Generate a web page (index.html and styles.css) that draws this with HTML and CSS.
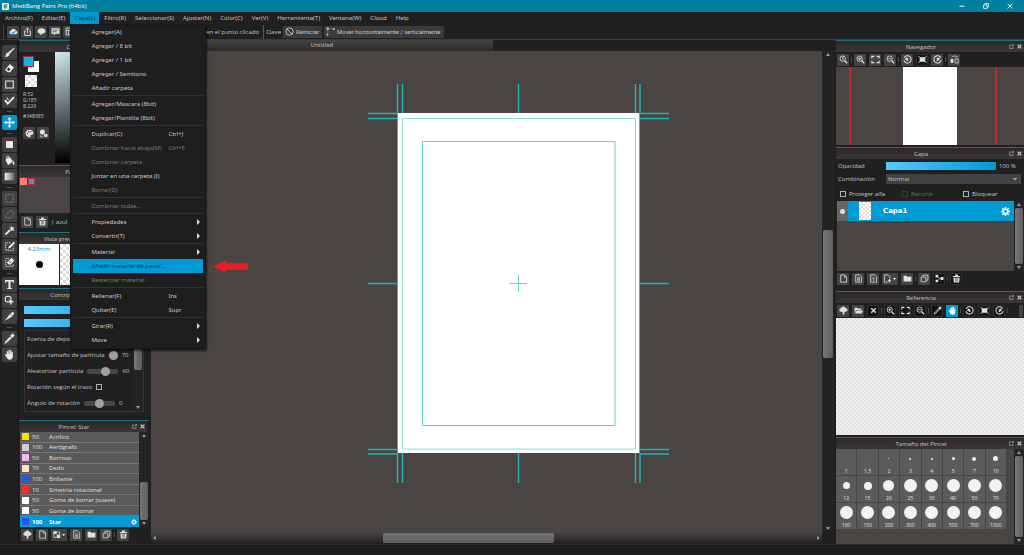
FILE: index.html
```
<!DOCTYPE html>
<html lang="es">
<head>
<meta charset="utf-8">
<title>MediBang Paint Pro (64bit)</title>
<link rel="stylesheet" href="styles.css">
</head>
<body>
<svg class="sprite" aria-hidden="true">
  <symbol id="cloud" viewBox="0 0 16 16"><path fill="#cfe4f5" d="M4 13a3.5 3.5 0 0 1-.4-6.9A4.6 4.6 0 0 1 12.300 6 3.600 3.600 0 0 1 12 13z"/><path d="M5 9l2.500 2.500L12 7" fill="none" stroke="#3d8fd0" stroke-width="2"/></symbol>
  <symbol id="share" viewBox="0 0 16 16"><path d="M5 7H3v8h10V7h-2M8 11V2M5 4.500L8 1.500l3 3" fill="none" stroke="currentColor" stroke-width="1.600"/></symbol>
  <symbol id="bubble" viewBox="0 0 16 16"><path d="M8 2c4 0 7 2 7 5s-3 5-6 5l-3 3v-3C3 11.500 1 9.500 1 7c0-3 3-5 7-5z" fill="currentColor"/></symbol>
  <symbol id="chat" viewBox="0 0 16 16"><path d="M1 2h14v10H8l-3 3v-3H1z" fill="currentColor"/><path d="M3 5.500h10M3 8.500h7" stroke="#444" stroke-width="1.400"/></symbol>
  <symbol id="grid" viewBox="0 0 16 16"><path d="M2 2h12v12H2zM2 6h12M6 6v8" fill="none" stroke="currentColor" stroke-width="1.500"/></symbol>
  <symbol id="ban" viewBox="0 0 16 16"><circle cx="8" cy="8" r="6.500" fill="none" stroke="currentColor" stroke-width="1.600"/><path d="M3.500 3.500l9 9" stroke="currentColor" stroke-width="1.600"/></symbol>
  <symbol id="axis" viewBox="0 0 16 16"><path d="M1 1h4v4H1zM12 2h4v3h-4zM1 12h3v3H1z" fill="currentColor"/><path d="M5 3h7M3 5v7" stroke="currentColor" stroke-dasharray="1.500 1"/></symbol>
  <symbol id="brush" viewBox="0 0 16 16"><path d="M15 1.500L8 9.500 6.500 8z" fill="currentColor" stroke="currentColor" stroke-width="1.200"/><path d="M6 8.500l2 2C7 14 4 14.500 1 14c1.500-1 1.500-2 2-3.500C3.500 9 4.500 8.300 6 8.500z" fill="currentColor"/></symbol>
  <symbol id="eraser" viewBox="0 0 16 16"><path d="M8.500 1.500l6 5-5.500 7H5.500L1.500 10z" fill="currentColor"/><path d="M6.500 6.500L4 9.500l3 2.500 2.500-3z" fill="#333"/></symbol>
  <symbol id="square" viewBox="0 0 16 16"><path d="M2.500 3h11v10h-11z" fill="none" stroke="currentColor" stroke-width="1.500"/></symbol>
  <symbol id="check" viewBox="0 0 16 16"><path d="M1.500 7.500l4 5L14.500 3" fill="none" stroke="currentColor" stroke-width="2.600"/><path d="M4 4l2.500 3" stroke="currentColor" stroke-width="1.500"/></symbol>
  <symbol id="move" viewBox="0 0 16 16"><path d="M8 0l3 3.500H9V7h3.500V5L16 8l-3.500 3V9H9v3.500h2L8 16l-3-3.500h2V9H3.500v2L0 8l3.500-3v2H7V3.500H5z" fill="currentColor"/></symbol>
  <symbol id="fillsq" viewBox="0 0 16 16"><path d="M3 3h10v10H3z" fill="currentColor"/></symbol>
  <symbol id="bucket" viewBox="0 0 16 16"><path d="M2 7l6-4 5 6-7 6z" fill="currentColor"/><path d="M4 6c-1-6 4-6 5 1" fill="none" stroke="currentColor" stroke-width="1.400"/><path d="M13 8c2 2 3 5 1.500 6S12 12 13 8z" fill="currentColor"/></symbol>
  <symbol id="gradient" viewBox="0 0 16 16"><linearGradient id="gg"><stop stop-color="#eee"/><stop offset="1" stop-color="#666"/></linearGradient><path d="M1 2.500h14v11H1z" fill="url(#gg)"/></symbol>
  <symbol id="marquee" viewBox="0 0 16 16"><path d="M2.500 2.500h11v11h-11z" fill="none" stroke="currentColor" stroke-width="1.300" stroke-dasharray="2 1.300"/></symbol>
  <symbol id="lasso" viewBox="0 0 16 16"><path d="M3 12C0 8 5 8 7 4c3-3 8-1 7 3s-4 6-7 6-3 1-4-1z" fill="none" stroke="currentColor" stroke-width="1.300" stroke-dasharray="2 1"/></symbol>
  <symbol id="wand" viewBox="0 0 16 16"><path d="M2 14l7-7" stroke="currentColor" stroke-width="2.600"/><path d="M11 1l1 2.500L15 3l-1.500 2.500L15 8l-3-.5L10 9V6L8 4l2.500-.5z" fill="currentColor"/></symbol>
  <symbol id="selpen" viewBox="0 0 16 16"><path d="M9 2.500H2.500v11h11V8" fill="none" stroke="currentColor" stroke-width="1.300" stroke-dasharray="2 1"/><path d="M14 1l2 2-7 7-3 1 1-3z" fill="currentColor"/></symbol>
  <symbol id="seleraser" viewBox="0 0 16 16"><path d="M7 2.500H2.500v11h11V10" fill="none" stroke="currentColor" stroke-width="1.300" stroke-dasharray="2 1"/><path d="M11 1l4 4-5 6H7L4 8z" fill="currentColor"/><path d="M7 6l3 3" stroke="#333" stroke-width="1.300"/></symbol>
  <symbol id="text" viewBox="0 0 16 16"><path d="M1.500 1.500h13v4h-1.500l-.7-2H9.500v9.500l2 .5v1.200h-7v-1.200l2-.5V3.500H3.700L3 5.500H1.500z" fill="currentColor"/></symbol>
  <symbol id="select" viewBox="0 0 16 16"><circle cx="6" cy="6" r="4.300" fill="none" stroke="currentColor" stroke-width="1.500"/><path d="M7 6l8 4-3.500 1L10 15z" fill="currentColor"/></symbol>
  <symbol id="knife" viewBox="0 0 16 16"><path d="M1 14L9 4l4-3 2 2-3 5-5 3z" fill="currentColor"/><path d="M9 4.500l3.500 3" stroke="#444"/></symbol>
  <symbol id="dropper" viewBox="0 0 16 16"><path d="M9.500 4l3-3 2.500 2.500-3 3z" fill="currentColor" stroke="currentColor"/><path d="M9.500 5.500L3 12l-1 2.500L4.500 13 11 6.500" fill="none" stroke="currentColor" stroke-width="1.500"/></symbol>
  <symbol id="hand" viewBox="0 0 16 16"><path d="M4 9V3.500a1 1 0 0 1 1.800 0V7h.5V1.800a1 1 0 0 1 1.900 0V7h.5V2.200a1 1 0 0 1 1.900 0V8h.5V4.500a1 1 0 0 1 1.800 0V11c0 3-2 4.500-4.500 4.500S5 14.500 3.500 12L1 8.500C1 7 2.500 7 4 9z" fill="currentColor"/></symbol>
  <symbol id="palette" viewBox="0 0 16 16"><path d="M8 1.500c4 0 7 2.500 7 6 0 2.500-2 3-4 3-1.500 0-1.500 1-1 2s0 2-2 2c-4 0-7-3-7-6.500s3-6.500 7-6.500z" fill="currentColor"/><g fill="#444"><circle cx="4.500" cy="8" r="1.200"/><circle cx="6.500" cy="4.700" r="1.200"/><circle cx="10.500" cy="4.700" r="1.200"/></g></symbol>
  <symbol id="swap" viewBox="0 0 16 16"><circle cx="6" cy="5.500" r="4.500" fill="currentColor"/><path d="M9 9h6v5H9z" fill="currentColor"/><path d="M3 11v3h4" fill="none" stroke="currentColor" stroke-width="1.300"/></symbol>
  <symbol id="page" viewBox="0 0 16 16"><path d="M3 1.500h7l3.500 3.500v9.500H3zM9.500 2v3.500H13" fill="none" stroke="currentColor" stroke-width="1.400"/></symbol>
  <symbol id="page8" viewBox="0 0 16 16"><path d="M3 1.500h7l3.500 3.500v9.500H3z" fill="none" stroke="currentColor" stroke-width="1.400"/><path d="M6.500 6h3.500v6H6.500zM6.500 9H10" fill="none" stroke="currentColor" stroke-width="1.300"/></symbol>
  <symbol id="page1" viewBox="0 0 16 16"><path d="M3 1.500h7l3.500 3.500v9.500H3zM6.500 7.500L8.500 6v6" fill="none" stroke="currentColor" stroke-width="1.400"/></symbol>
  <symbol id="pagelines" viewBox="0 0 16 16"><path d="M3 1.500h7l3.500 3.500v9.500H3zM5.500 7h5.500M5.500 9.500h5.500M5.500 12h5.500" fill="none" stroke="currentColor" stroke-width="1.300"/></symbol>
  <symbol id="pageplus" viewBox="0 0 24 16"><path d="M12 8V5L8.500 1.500H2v13h6" fill="none" stroke="currentColor" stroke-width="1.400"/><path d="M11 9v6M8 12h6" stroke="currentColor" stroke-width="2"/><path d="M17 7h6l-3 3.500z" fill="currentColor"/></symbol>
  <symbol id="imageadd" viewBox="0 0 24 16"><path d="M2 2h6v5H2zM8 8h6v6H8z" fill="currentColor"/><path d="M8 3.500h5V8M3 7v6h5" fill="none" stroke="currentColor" stroke-width="1.400"/><path d="M17 7h6l-3 3.500z" fill="currentColor"/></symbol>
  <symbol id="folder" viewBox="0 0 16 16"><path d="M1 3h5l1.500 2H15v8.500H1z" fill="currentColor"/></symbol>
  <symbol id="folderopen" viewBox="0 0 16 16"><path d="M1 3h5l1.500 1.500H13V7H4l-3 6z" fill="currentColor"/><path d="M4.500 8H16l-2.500 5.500H2z" fill="currentColor"/></symbol>
  <symbol id="copy" viewBox="0 0 16 16"><path d="M2 5.500h8.500V14H2zM5 5V2h9v9h-3" fill="none" stroke="currentColor" stroke-width="1.400"/></symbol>
  <symbol id="merge" viewBox="0 0 16 16"><path d="M1 1.500h4.500V6H1zM1 10h4.500v4.500H1zM10 5.500h5v5h-5z" fill="currentColor"/><path d="M5 4l3 4-3 4M8 8h3" fill="none" stroke="currentColor" stroke-width="1.200"/></symbol>
  <symbol id="trash" viewBox="0 0 16 16"><path d="M1.500 3.500h13V5.500h-13zM5.500 1h5v2.500h-5zM2.500 6.500h11l-.7 8.500H3.200z" fill="currentColor"/><path d="M6 7.500v6M8 7.500v6M10 7.500v6" stroke="#444" stroke-width=".9"/></symbol>
  <symbol id="upload" viewBox="0 0 16 16"><path d="M3.500 10a3 3 0 0 1 0-6A4.500 4.500 0 0 1 12 4a3 3 0 0 1 .5 6H11L8 6.500 5 10z" fill="currentColor"/><path d="M8 6l4 4.500H9.500V15h-3v-4.500H4z" fill="currentColor"/></symbol>
  <symbol id="zoomin" viewBox="0 0 16 16"><circle cx="6.500" cy="6.500" r="4.700" fill="none" stroke="currentColor" stroke-width="1.500"/><path d="M10 10l4.500 4.500" stroke="currentColor" stroke-width="2.400"/><path d="M6.500 4v5M4 6.500h5" stroke="currentColor" stroke-width="1.500"/></symbol>
  <symbol id="zoomout" viewBox="0 0 16 16"><circle cx="6.500" cy="6.500" r="4.700" fill="none" stroke="currentColor" stroke-width="1.500"/><path d="M10 10l4.500 4.500" stroke="currentColor" stroke-width="2.400"/><path d="M4 6.500h5" stroke="currentColor" stroke-width="1.500"/></symbol>
  <symbol id="zoomone" viewBox="0 0 16 16"><circle cx="6.500" cy="6.500" r="4.700" fill="none" stroke="currentColor" stroke-width="1.500"/><path d="M10 10l4.500 4.500" stroke="currentColor" stroke-width="2.400"/><path d="M5.500 5L7 4v5" fill="none" stroke="currentColor" stroke-width="1.300"/></symbol>
  <symbol id="fit" viewBox="0 0 16 16"><path d="M1.500 6V2.500H6M10 2.500h4.500V6M14.500 10v3.500H10M6 13.500H1.500V10" fill="none" stroke="currentColor" stroke-width="2"/></symbol>
  <symbol id="rotl" viewBox="0 0 16 16"><path d="M2 5a6.500 6.500 0 1 1-.5 4" fill="none" stroke="currentColor" stroke-width="1.800"/><path d="M4 9l1-5 6 3-3 1 2 2-2 1-2-2z" fill="currentColor"/></symbol>
  <symbol id="rotr" viewBox="0 0 16 16"><path d="M14 5a6.500 6.500 0 1 0 .5 4" fill="none" stroke="currentColor" stroke-width="1.800"/><path d="M12 9l-1-5-6 3 3 1-2 2 2 1 2-2z" fill="currentColor"/></symbol>
  <symbol id="reset" viewBox="0 0 16 16"><path d="M3 4h10v8H3z" fill="currentColor"/><path d="M1 2l4 4M15 2l-4 4M1 14l4-4M15 14l-4-4" stroke="currentColor" stroke-width="1.600"/></symbol>
  <symbol id="flip" viewBox="0 0 16 16"><path d="M1 7h5v7H1z" fill="currentColor"/><path d="M9 7h5.500v7H9zM3 4c2-3 7-3 9 0l1-2" fill="none" stroke="currentColor" stroke-width="1.400"/></symbol>
  <symbol id="cross" viewBox="0 0 16 16"><path d="M4 4l8 8M12 4l-8 8" stroke="currentColor" stroke-width="2.400"/></symbol>
  <symbol id="popout" viewBox="0 0 16 16"><path d="M8 3H2v11h11V8M9 7l5.500-5.500M10.500 1H15v4.500" fill="none" stroke="currentColor" stroke-width="1.800"/></symbol>
  <symbol id="close" viewBox="0 0 16 16"><path d="M2 2l12 12M14 2L2 14" stroke="currentColor" stroke-width="4.500"/></symbol>
  <symbol id="min" viewBox="0 0 16 16"><path d="M1 8.500h14" stroke="currentColor" stroke-width="2.400"/></symbol>
  <symbol id="restore" viewBox="0 0 16 16"><path d="M1.500 5h9.500v9.500H1.500zM5 4.500V1.500h9.500V11H11.500" fill="none" stroke="currentColor" stroke-width="2"/></symbol>
  <symbol id="exit" viewBox="0 0 16 16"><path d="M1.500 1.500l13 13M14.500 1.500l-13 13" stroke="currentColor" stroke-width="2.400"/></symbol>
  <symbol id="gear" viewBox="0 0 16 16"><circle cx="8" cy="8" r="4" fill="none" stroke="currentColor" stroke-width="3"/><path d="M8 0v3M8 13v3M0 8h3M13 8h3M2.300 2.300l2.200 2.200M11.500 11.500l2.200 2.200M13.700 2.300l-2.200 2.200M4.500 11.500l-2.200 2.200" stroke="currentColor" stroke-width="2.600"/></symbol>
</svg>

<header class="titlebar">
  <svg class="logo" viewBox="0 0 16 16"><rect width="16" height="16" rx="3" fill="#f4f8f5"/><path d="M4 4h4v9H6c-2 0-2-2-2-4z" fill="#1c9f6c"/><path d="M8 3h4v6c0 3-2 4-4 4z" fill="#39b54a"/><path d="M5 3h6v2H5z" fill="#d84a4a"/></svg>
  <h1>MediBang Paint Pro (64bit)</h1>
  <div class="winbtns">
    <button aria-label="Minimizar"><svg><use href="#min"/></svg></button>
    <button aria-label="Restaurar"><svg><use href="#restore"/></svg></button>
    <button aria-label="Cerrar"><svg><use href="#exit"/></svg></button>
  </div>
</header>

<nav class="menubar">
  <button>Archivo(F)</button><button>Editar(E)</button>
  <div class="menuwrap">
    <button class="open" aria-expanded="true">Capa(L)</button>
    <ul class="menu">
      <li><button>Agregar(A)</button></li>
      <li><button>Agregar / 8 bit</button></li>
      <li><button>Agregar / 1 bit</button></li>
      <li><button>Agregar / Semitono</button></li>
      <li><button>Añadir carpeta</button></li>
      <li class="sep"><button>Agregar/Mascara (8bit)</button></li>
      <li><button>Agregar/Plantilla (8bit)</button></li>
      <li class="sep"><button>Duplicar(C)<kbd>Ctrl+J</kbd></button></li>
      <li><button disabled>Combinar hacia abajo(M)<kbd>Ctrl+E</kbd></button></li>
      <li><button disabled>Combinar carpeta</button></li>
      <li><button>Juntar en una carpeta (I)</button></li>
      <li><button disabled>Borrar(D)</button></li>
      <li class="sep"><button disabled>Combinar todas...</button></li>
      <li class="sep"><button class="sub">Propiedades</button></li>
      <li><button class="sub">Convertir(T)</button></li>
      <li class="sep"><button class="sub">Material</button></li>
      <li class="hot"><button>Añadir material de panel...</button>
        <svg class="pointer" viewBox="0 0 38 14"><path d="M0 7L14 0v3.500h23v7H14V14z" fill="#ed1c24"/></svg></li>
      <li><button disabled>Rasterizar material</button></li>
      <li class="sep"><button>Rellenar(F)<kbd>Ins</kbd></button></li>
      <li><button>Quitar(E)<kbd>Supr</kbd></button></li>
      <li class="sep"><button class="sub">Girar(R)</button></li>
      <li><button class="sub">Move</button></li>
    </ul>
  </div>
  <button>Filtro(R)</button><button>Seleccionar(S)</button><button>Ajustar(N)</button><button>Color(C)</button><button>Ver(V)</button><button>Herramienta(T)</button><button>Ventana(W)</button><button>Cloud</button><button>Help</button>
</nav>

<div class="options">
  <div class="optleft">
    <button class="ib" aria-label="Nube"><svg><use href="#cloud"/></svg></button>
    <button class="ib" aria-label="Compartir"><svg><use href="#share"/></svg></button>
    <button class="ib" aria-label="Comentario"><svg><use href="#bubble"/></svg></button>
    <button class="ib" aria-label="Mensajes"><svg><use href="#chat"/></svg></button>
    <button class="ib" aria-label="Cuadrícula"><svg><use href="#grid"/></svg></button>
    <span class="opttext">Selecciona en el punto clicado</span>
  </div>
  <span>Clave</span>
  <button class="tb"><svg><use href="#ban"/></svg>Reiniciar</button>
  <button class="tb"><svg><use href="#axis"/></svg>Mover horizontalmente / verticalmente</button>
</div>

<main class="workspace">
  <div class="tools">
    <button aria-label="Pincel"><svg><use href="#brush"/></svg></button>
    <button aria-label="Goma"><svg><use href="#eraser"/></svg></button>
    <button aria-label="Forma"><svg><use href="#square"/></svg></button>
    <button aria-label="Punto"><svg><use href="#check"/></svg></button>
    <hr>
    <button class="on" aria-label="Mover"><svg><use href="#move"/></svg></button>
    <hr>
    <button aria-label="Relleno"><svg><use href="#fillsq"/></svg></button>
    <button aria-label="Bote"><svg><use href="#bucket"/></svg></button>
    <button aria-label="Degradado"><svg><use href="#gradient"/></svg></button>
    <hr>
    <button class="dim" aria-label="Selección"><svg><use href="#marquee"/></svg></button>
    <button class="dim" aria-label="Lazo"><svg><use href="#lasso"/></svg></button>
    <button aria-label="Varita"><svg><use href="#wand"/></svg></button>
    <button aria-label="Lápiz de selección"><svg><use href="#selpen"/></svg></button>
    <button aria-label="Borrar selección"><svg><use href="#seleraser"/></svg></button>
    <hr>
    <button aria-label="Texto"><svg><use href="#text"/></svg></button>
    <button aria-label="Operación"><svg><use href="#select"/></svg></button>
    <button aria-label="Dividir"><svg><use href="#knife"/></svg></button>
    <hr>
    <button aria-label="Cuentagotas"><svg><use href="#dropper"/></svg></button>
    <button aria-label="Mano"><svg><use href="#hand"/></svg></button>
  </div>

  <aside class="dock left">
    <section class="panel">
      <header><h2>Color</h2><button aria-label="Separar"><svg><use href="#popout"/></svg></button><button aria-label="Cerrar panel"><svg><use href="#close"/></svg></button></header>
      <div class="colorbody">
        <div class="colorinfo">
          <div class="swatches"><i class="bg"></i><i class="fg"></i></div>
          <i class="checker trans"></i>
          <p>R:52<br>G:185<br>B:229</p>
          <p>#34B9E5</p>
          <div class="row"><button class="ib" aria-label="Paleta"><svg><use href="#palette"/></svg></button><button class="ib" aria-label="Cambiar"><svg><use href="#swap"/></svg></button></div>
        </div>
        <div class="picker"></div>
      </div>
    </section>
    <section class="panel">
      <header><h2>Paleta</h2><button aria-label="Separar"><svg><use href="#popout"/></svg></button><button aria-label="Cerrar panel"><svg><use href="#close"/></svg></button></header>
      <div class="palbody"><i class="coral"></i><i class="blue"></i></div>
      <div class="bar tall"><button class="ib" aria-label="Nuevo"><svg><use href="#page"/></svg></button><button class="ib" aria-label="Eliminar"><svg><use href="#trash"/></svg></button><span>| azul</span></div>
    </section>
    <section class="panel">
      <header><h2>Vista previa del pincel</h2><button aria-label="Separar"><svg><use href="#popout"/></svg></button><button aria-label="Cerrar panel"><svg><use href="#close"/></svg></button></header>
      <div class="preview"><div class="tip"><span>4.23mm</span><i></i></div><div class="checker stroke"></div></div>
    </section>
    <section class="panel">
      <header><h2>Control de pincel</h2><button aria-label="Separar"><svg><use href="#popout"/></svg></button><button aria-label="Cerrar panel"><svg><use href="#close"/></svg></button></header>
      <div class="control">
        <input class="fill" type="range" value="100" aria-label="Tamaño">
        <input class="fill" type="range" value="100" aria-label="Opacidad del pincel">
        <div class="params">
          <div class="paramlist">
            <label>Fuerza de deposición<input type="range" class="mini" value="50"></label>
            <label>Ajustar tamaño de partícula<input type="range" class="mini knob" value="70"><output>70</output></label>
            <label>Aleatorizar partícula<input type="range" class="mini" value="60"><output>60</output></label>
            <label>Rotación según el trazo<input type="checkbox"></label>
            <label>Ángulo de rotación<input type="range" class="mini" value="50"><output>0</output></label>
          </div>
          <div class="sb" style="--a:1;--b:30;--c:32"><b></b><div><i></i></div><b class="dn"></b></div>
        </div>
      </div>
    </section>
    <section class="panel grow">
      <header><h2>Pincel: Star</h2><button aria-label="Separar"><svg><use href="#popout"/></svg></button><button aria-label="Cerrar panel"><svg><use href="#close"/></svg></button></header>
      <div class="brushes">
        <ul>
          <li><i style="background:#f5e100"></i><span>50</span>Acrílico</li>
          <li><i style="background:#cfcfcf"></i><span>100</span>Aerógrafo</li>
          <li><i style="background:#f8b4f0"></i><span>50</span>Borroso</li>
          <li><i style="background:#fde3c0"></i><span>70</span>Dedo</li>
          <li><i style="background:#1f5af0"></i><span>100</span>Brillante</li>
          <li><i style="background:#ff2d2d"></i><span>10</span>Simetría rotacional</li>
          <li><i style="background:#fff"></i><span>50</span>Goma de borrar (suave)</li>
          <li><i style="background:#fff"></i><span>50</span>Goma de borrar</li>
          <li class="on"><i style="background:#1f5af0"></i><span>100</span>Star<svg><use href="#gear"/></svg></li>
        </ul>
        <div class="sb" style="--a:44;--b:38;--c:0"><b></b><div><i></i></div><b class="dn"></b></div>
      </div>
      <div class="bar"><button class="ib" aria-label="Subir"><svg><use href="#upload"/></svg></button><button class="ib" aria-label="Nuevo"><svg><use href="#page"/></svg></button><button class="ib wide" aria-label="Agregar imagen"><svg><use href="#imageadd"/></svg></button><button class="ib" aria-label="Script"><svg><use href="#pagelines"/></svg></button><button class="ib" aria-label="Carpeta"><svg><use href="#folder"/></svg></button><button class="ib" aria-label="Duplicar"><svg><use href="#copy"/></svg></button><s></s><button class="ib" aria-label="Eliminar"><svg><use href="#trash"/></svg></button></div>
    </section>
  </aside>

  <section class="document">
    <div class="tab">Untitled</div>
    <div class="canvas">
      <svg class="sheet" viewBox="0 0 301 401">
        <path d="M29.500 30h242v340h-242z" fill="#fff"/>
        <g fill="none" stroke="#1fb5ba">
          <path d="M29.500 1v29M34.500 1v29M150.500 1v29M267.500 1v29M272 1v29M29.500 370v30M34.500 370v30M150.500 370v30M267.500 370v30M272 370v30M0 30.500h29M0 35.500h29M0 200.500h29M0 366.500h29M0 371h29M272 30.500h29M272 35.500h29M272 200.500h29M272 366.500h29M272 371h29" stroke-width="1.400"/>
          <path d="M29.500 30v341M271.500 30v341" stroke-width=".7"/>
        </g>
        <g fill="none" stroke="#63d3c8"><path d="M34.500 35.500h233v330.500h-233z" stroke="#8be0d2"/><path d="M54.500 58.500h192.500v284h-192.500z"/><path d="M142 200.500h17M150.500 192v17"/></g>
      </svg>
    </div>
    <div class="sb vert" style="--a:169;--b:126;--c:165"><b></b><div><i></i></div><b class="dn"></b></div>
    <div class="sb horiz" style="--a:223;--b:170;--c:259"><b class="lt"></b><div><i></i></div><b class="rt"></b></div>
  </section>

  <aside class="dock right">
    <section class="panel">
      <header><h2>Navegador</h2><button aria-label="Separar"><svg><use href="#popout"/></svg></button><button aria-label="Cerrar panel"><svg><use href="#close"/></svg></button></header>
      <div class="bar"><button class="ib" aria-label="Tamaño real"><svg><use href="#zoomone"/></svg></button><s></s><button class="ib" aria-label="Acercar"><svg><use href="#zoomin"/></svg></button><button class="ib" aria-label="Ajustar"><svg><use href="#fit"/></svg></button><button class="ib" aria-label="Alejar"><svg><use href="#zoomout"/></svg></button><s></s><button class="ib" aria-label="Girar izquierda"><svg><use href="#rotl"/></svg></button><button class="ib dark" aria-label="Restablecer"><svg><use href="#reset"/></svg></button><button class="ib" aria-label="Girar derecha"><svg><use href="#rotr"/></svg></button><s></s><button class="ib" aria-label="Voltear"><svg><use href="#flip"/></svg></button></div>
      <div class="navview"><i class="edge"></i><i class="thumb"></i><i class="edge"></i></div>
    </section>
    <section class="panel layerpanel">
      <header><h2>Capa</h2><button aria-label="Separar"><svg><use href="#popout"/></svg></button><button aria-label="Cerrar panel"><svg><use href="#close"/></svg></button></header>
      <div class="layeropts">
        <label for="op">Opacidad</label><div class="row"><input id="op" class="fill" type="range" value="100"><output>100 %</output></div>
        <label for="mode">Combinación</label><select id="mode"><option>Normal</option></select>
      </div>
      <div class="checks"><label><input type="checkbox">Proteger alfa</label><label class="off"><input type="checkbox" disabled>Recorte</label><label><input type="checkbox">Bloquear</label></div>
      <div class="layers">
        <div class="list"><div class="layer"><span class="eye"></span><i class="checker"></i><b>Capa1</b><svg><use href="#gear"/></svg></div></div>
        <div class="sb" style="--a:0;--b:58;--c:0"><b></b><div><i></i></div><b class="dn"></b></div>
      </div>
      <div class="bar"><button class="ib" aria-label="Nueva capa"><svg><use href="#page"/></svg></button><button class="ib" aria-label="Capa 8 bit"><svg><use href="#page8"/></svg></button><button class="ib" aria-label="Capa 1 bit"><svg><use href="#page1"/></svg></button><button class="ib wide" aria-label="Agregar capa"><svg><use href="#pageplus"/></svg></button><button class="ib" aria-label="Carpeta"><svg><use href="#folder"/></svg></button><s></s><button class="ib" aria-label="Duplicar"><svg><use href="#copy"/></svg></button><button class="ib dark" aria-label="Combinar"><svg><use href="#merge"/></svg></button><s></s><button class="ib dark" aria-label="Eliminar"><svg><use href="#trash"/></svg></button></div>
    </section>
    <section class="panel grow">
      <header><h2>Referencia</h2><button aria-label="Separar"><svg><use href="#popout"/></svg></button><button aria-label="Cerrar panel"><svg><use href="#close"/></svg></button></header>
      <div class="bar"><button class="ib" aria-label="Nube"><svg><use href="#upload"/></svg></button><button class="ib" aria-label="Abrir"><svg><use href="#folderopen"/></svg></button><button class="ib dark" aria-label="Quitar"><svg><use href="#cross"/></svg></button><s></s><button class="ib dark" aria-label="Acercar"><svg><use href="#zoomin"/></svg></button><button class="ib dark" aria-label="Ajustar"><svg><use href="#fit"/></svg></button><button class="ib dark" aria-label="Alejar"><svg><use href="#zoomout"/></svg></button><s></s><button class="ib dark" aria-label="Cuentagotas"><svg><use href="#dropper"/></svg></button><button class="ib on" aria-label="Mano"><svg><use href="#hand"/></svg></button><s></s><button class="ib dark" aria-label="Girar izquierda"><svg><use href="#rotl"/></svg></button><button class="ib dark" aria-label="Restablecer"><svg><use href="#reset"/></svg></button><button class="ib dark" aria-label="Girar derecha"><svg><use href="#rotr"/></svg></button><s></s><i class="more"></i></div>
      <div class="refview"></div>
    </section>
    <section class="panel">
      <header><h2>Tamaño del Pincel</h2><button aria-label="Separar"><svg><use href="#popout"/></svg></button><button aria-label="Cerrar panel"><svg><use href="#close"/></svg></button></header>
      <div class="sizes">
        <div class="sizegrid">
          <button><i style="width:0"></i>1</button><button><i style="width:0"></i>1.5</button><button><i style="width:1px"></i>2</button><button><i style="width:2px"></i>3</button><button><i style="width:2px"></i>4</button><button><i style="width:3px"></i>5</button><button><i style="width:4px"></i>7</button><button><i style="width:5px"></i>10</button>
          <button><i style="width:7px"></i>12</button><button><i style="width:8px"></i>15</button><button><i style="width:11px"></i>20</button><button><i style="width:13px"></i>25</button><button><i style="width:13px"></i>30</button><button><i style="width:13px"></i>40</button><button><i style="width:13px"></i>50</button><button><i style="width:13px"></i>70</button>
          <button><i style="width:13px"></i>100</button><button><i style="width:13px"></i>150</button><button><i style="width:13px"></i>200</button><button><i style="width:13px"></i>300</button><button><i style="width:13px"></i>400</button><button><i style="width:13px"></i>500</button><button><i style="width:13px"></i>700</button><button><i style="width:13px"></i>1000</button>
        </div>
        <div class="sb" style="--a:0;--b:82;--c:0"><b></b><div><i></i></div><b class="dn"></b></div>
      </div>
    </section>
  </aside>
</main>
<footer class="status"></footer>
</body>
</html>
```
FILE: styles.css
```
* { box-sizing: border-box; margin: 0; padding: 0; }
body { display: flex; flex-direction: column; height: 100vh; overflow: hidden; background: #202020; color: #c4c4c4; font: 6px/8px "Open Sans", "Noto Sans", sans-serif; }
button, input, select, output, kbd { font: inherit; color: inherit; background: none; border: 0; }
button { display: flex; align-items: center; justify-content: center; white-space: nowrap; }
ul { list-style: none; }
svg { display: block; }
i, b { display: block; font-style: normal; }
.sprite { position: absolute; width: 0; height: 0; }
.row { display: flex; align-items: center; }

.titlebar { display: flex; align-items: center; height: 12px; flex: none; background: #017f9f; color: #fff; padding: 0 2px; gap: 3px; }
.titlebar h1 { font-size: 6px; font-weight: 400; }
.logo { width: 7px; height: 7px; }
.winbtns { display: flex; margin-left: auto; }
.winbtns button { width: 24px; height: 12px; }
.winbtns svg { width: 6px; height: 6px; }

.menubar { display: flex; gap: 1px; height: 12px; flex: none; padding-left: 1px; font-family: "Noto Sans", "Open Sans", sans-serif; }
.menubar > button, .menubar .open { height: 12px; padding: 0 4px; }
.menubar .open { background: #0098d2; color: #06374d; }
.menuwrap { position: relative; }
.menu { position: absolute; z-index: 5; top: 12px; left: 0; width: 136px; padding: 0 2px 1px; background: #1e1e1e; border: 1px solid #181818; box-shadow: 1px 2px 2px rgba(0,0,0,.6); }
.menu li { position: relative; height: 14px; }
.menu li.sep { height: 16px; padding-top: 1px; border-top: 1px solid #323232; }
.menu button { width: 100%; height: 14px; justify-content: flex-start; padding-left: 18px; color: #c8c8c8; }
.menu button:disabled { color: #7c7c7c; }
.menu kbd { position: absolute; left: 95px; }
.menu .hot button { background: #009ad4; color: #06405c; }
.menu .sub::after { content: ""; margin-left: auto; margin-right: 3px; border: 3px solid transparent; border-left-color: #ddd; border-right: 0; }
.pointer { position: absolute; left: 139px; top: 1px; width: 38px; height: 13px; }

.options { display: flex; align-items: center; height: 15px; flex: none; gap: 2px; padding-left: 3px; }
.optleft { display: flex; align-items: center; gap: 2px; width: 261px; height: 14px; padding-left: 3px; border-left: 1px solid #3a3a3a; border-right: 1px solid #1c6a9a; }
.opttext { margin-left: auto; margin-right: 4px; }
.tb { height: 12px; gap: 2px; padding: 0 3px 0 2px; background: #3b3b3b; border-radius: 1px; font-family: Roboto, "Liberation Sans", sans-serif; }
.tb svg { width: 9px; height: 9px; }

.ib { width: 12px; height: 12px; flex: none; background: #444; border-radius: 1px; color: #e0e0e0; }
.ib svg { width: 9px; height: 9px; }
.ib.wide { width: 16px; }
.ib.wide svg { width: 14px; }
.ib.dark { background: #141414; border: 1px solid #303030; }
.ib.on { background: #009ad4; color: #fff; }

.workspace { display: flex; flex: 1; min-height: 0; border-top: 1px solid #15485a; }
.tools { display: flex; flex-direction: column; gap: 1px; width: 19px; flex: none; padding: 5px 2px 0; border-right: 1px solid #161616; }
.tools button { width: 15px; height: 15px; background: #404040; border-radius: 2px; color: #ececec; }
.tools svg { width: 11px; height: 11px; }
.tools .on { background: #0098d2; }
.tools .dim { color: #8a8a8a; }
.tools hr { height: 1px; width: 5px; margin: 2px auto; border: 0; background: #555; }

.dock { display: flex; flex-direction: column; flex: none; gap: 2px; }
.left { width: 132px; padding: 0 2px 2px 0; }
.right { width: 189px; padding-left: 1px; }
.panel { border-top: 1px solid #1c7185; }
.panel > header { display: flex; align-items: center; height: 11px; padding-right: 2px; gap: 3px; background: linear-gradient(#2c2829, #3a3536); }
.left .panel > header { margin-right: 2px; }
.panel h2 { flex: 1; text-align: center; font-size: 6px; font-weight: 400; }
.panel > header svg { width: 5px; height: 5px; }
.grow { flex: 1; min-height: 0; display: flex; flex-direction: column; }
.layerpanel { padding-bottom: 3px; }
.bar { display: flex; align-items: center; gap: 3px; height: 15px; flex: none; padding: 0 1px; }
.bar.tall { height: 17px; }
.bar s { width: 1px; height: 5px; margin: 0 -1px; background: #484848; }
.left .bar { padding-left: 2px; }
.more { width: 4px; height: 12px; margin-left: auto; background: #444; }
.checker { background: repeating-conic-gradient(#ddd 0 25%, #fff 0 50%) 0 0 / 6px 6px; }

.colorbody { display: flex; height: 111px; gap: 3px; }
.colorinfo { width: 33px; padding: 4px 0 0 4px; line-height: 6px; font-size: 5px; }
.colorinfo p { margin-top: 4px; }
.swatches { position: relative; height: 16px; margin-bottom: 3px; }
.swatches i { position: absolute; width: 11px; height: 11px; }
.fg { left: 0; top: 0; background: #16b0e8; border: 1px solid #b8203a; }
.bg { left: 5px; top: 5px; background: #fff; }
.trans { width: 12px; height: 12px; margin-left: 2px; }
.colorinfo .row { gap: 2px; margin-top: 8px; width: 28px; }
.picker { flex: 1; background: linear-gradient(to bottom, transparent, #000), linear-gradient(to right, #dbe9ec, #00b0ea); }
.palbody { display: flex; height: 36px; gap: 1px; padding: 1px; background: #4a4444; }
.palbody i { width: 7px; height: 7px; }
.coral { background: #ff8370; }
.blue { background: #1aa6d8; border: 1px solid #c8243c; }
.preview { display: flex; height: 42px; padding-bottom: 1px; gap: 1px; }
.tip { width: 40px; padding-top: 1px; background: #fff; color: #258ba3; text-align: center; }
.tip i { width: 7px; height: 7px; margin: 8px auto 0; border-radius: 50%; background: #000; }
.stroke { flex: 1; }

input[type=range] { appearance: none; min-width: 0; }
.fill { display: block; width: 100%; height: 8px; background: linear-gradient(to right, #58c8ff, #009ad4); }
.fill::-webkit-slider-thumb { appearance: none; width: 0; height: 8px; }
.control { padding: 6px 5px; }
.control .fill + .fill { margin-top: 5px; }
.params { display: flex; justify-content: space-between; margin-top: 3px; border: 1px solid #353535; height: 82px; }
.paramlist { flex: 1; min-width: 0; overflow: hidden; }
.paramlist label { display: flex; align-items: center; gap: 4px; height: 16px; padding-left: 2px; white-space: nowrap; }
.mini { width: 31px; height: 5px; border-radius: 2px; background: #484848; }
.mini.knob { width: 9px; }
.mini::-webkit-slider-thumb { appearance: none; width: 9px; height: 9px; border-radius: 50%; background: #a0a0a0; }
input[type=checkbox] { appearance: none; width: 6px; height: 6px; border: 1px solid #b0b0b0; flex: none; }

.brushes { display: flex; flex: 1; min-height: 0; padding-left: 1px; }
.brushes ul { flex: 1; display: grid; grid-auto-rows: 1fr; min-height: 0; background: #5a5a5a; }
.brushes li { display: flex; align-items: center; min-height: 0; padding: 0 2px; border-bottom: 1px solid #777; color: #e0e0e0; line-height: 8px; }
.brushes li i { width: 7px; height: 7px; flex: none; margin-right: 3px; }
.brushes li span { width: 17px; }
.brushes li svg { width: 6px; height: 6px; margin-left: auto; color: #fff; }
.brushes .on { background: #009ad4; color: #fff; font-weight: 700; border: 0; }

.sb { display: flex; flex-direction: column; width: 10px; flex: none; background: #242424; }
.sb > b { width: 0; height: 0; margin: 2px auto; border: 2px solid transparent; border-top: 0; border-bottom: 3px solid #999; }
.sb > b.dn { border-top: 3px solid #999; border-bottom: 0; }
.sb > div { display: flex; flex-direction: column; flex: 1; padding: 0 1px; }
.sb > div::before { content: ""; flex: var(--a); }
.sb > div::after { content: ""; flex: var(--c); }
.sb > div i { flex: var(--b); border-radius: 2px; background: linear-gradient(to right, #777, #5e5e5e); }

.document { flex: 1; min-width: 0; display: grid; grid-template: 11px 1fr 12px / 1fr 13px; background: #202020; }
.tab { width: 342px; text-align: center; line-height: 11px; background: linear-gradient(#454545, #2a2a2a); }
.canvas { position: relative; grid-row: 2; background: #4a4443; overflow: hidden; }
.sheet { position: absolute; left: 217px; top: 32px; width: 301px; height: 401px; }
.vert { grid-area: 2 / 2; width: 12px; }
.horiz { grid-area: 3 / 1; width: auto; flex-direction: row; background: linear-gradient(#484342, #202020); }
.horiz > div { flex-direction: row; padding: 1px 0; }
.horiz > div i { background: linear-gradient(#747474, #5e5e5e); }
.horiz > b.lt, .horiz > b.rt { margin: auto 2px; border: 2px solid transparent; border-left: 0; border-right: 3px solid #999; }
.horiz > b.rt { border-left: 3px solid #999; border-right: 0; }

.navview { display: flex; height: 78px; padding-left: 13px; background: #4a4443; }
.edge { width: 2px; background: #c42a2a; }
.thumb { width: 54px; margin: 0 38px 0 52px; background: #fff; }
.layeropts { display: grid; grid-template-columns: 45px 1fr; gap: 4px 3px; align-items: center; padding: 3px 3px 2px 2px; }
.layeropts .row { gap: 3px; }
.layeropts output { width: 22px; flex: none; white-space: nowrap; }
select { appearance: none; height: 10px; width: 100%; padding: 0 2px; background: linear-gradient(#999, #999) right 5px top 5px / 2px 1px no-repeat, linear-gradient(#999, #999) right 4px top 4px / 4px 1px no-repeat, #454142; }
.checks { display: grid; grid-template-columns: 62px 61px 1fr; padding: 0 4px; height: 15px; align-items: center; }
.checks label { display: flex; align-items: center; gap: 3px; }
.off { color: #6f6f6f; }
.off input[type=checkbox] { border-color: #3c3c3c; }
.layers { display: flex; height: 70px; padding-left: 1px; }
.list { flex: 1; background: #4a4443; }
.layer { display: flex; align-items: center; height: 20px; background: #009ad4; color: #fff; padding-right: 4px; }
.eye { display: grid; place-items: center; width: 11px; height: 20px; background: #666; }
.eye::before { content: ""; width: 5px; height: 5px; border-radius: 50%; background: #ddd; }
.layer .checker { width: 12px; height: 18px; margin: 0 12px 0 11px; background-size: 4px 4px; }
.layer b { font: 700 7px/9px "DejaVu Sans", sans-serif; }
.layer svg { width: 9px; height: 9px; margin-left: auto; }
.refview { flex: 1; background: repeating-conic-gradient(#e2e2e2 0 25%, #ededed 0 50%) 0 0 / 4px 4px; }
.sizes { display: flex; height: 95px; background: #4a4443; }
.sizegrid { flex: 1; display: grid; grid-template-columns: repeat(8, 1fr); grid-auto-rows: 26px; gap: 1px; align-content: start; margin-right: 8px; }
.sizegrid button { flex-direction: column; justify-content: flex-end; background: #5c5b5b; font-size: 5px; line-height: 7px; color: #e0e0e0; }
.sizegrid i { aspect-ratio: 1; margin: auto; border-radius: 50%; background: #f2f2f2; flex: none; }
.status { height: 11px; flex: none; background: #1d1d1d; border-top: 1px solid #303030; }
```
